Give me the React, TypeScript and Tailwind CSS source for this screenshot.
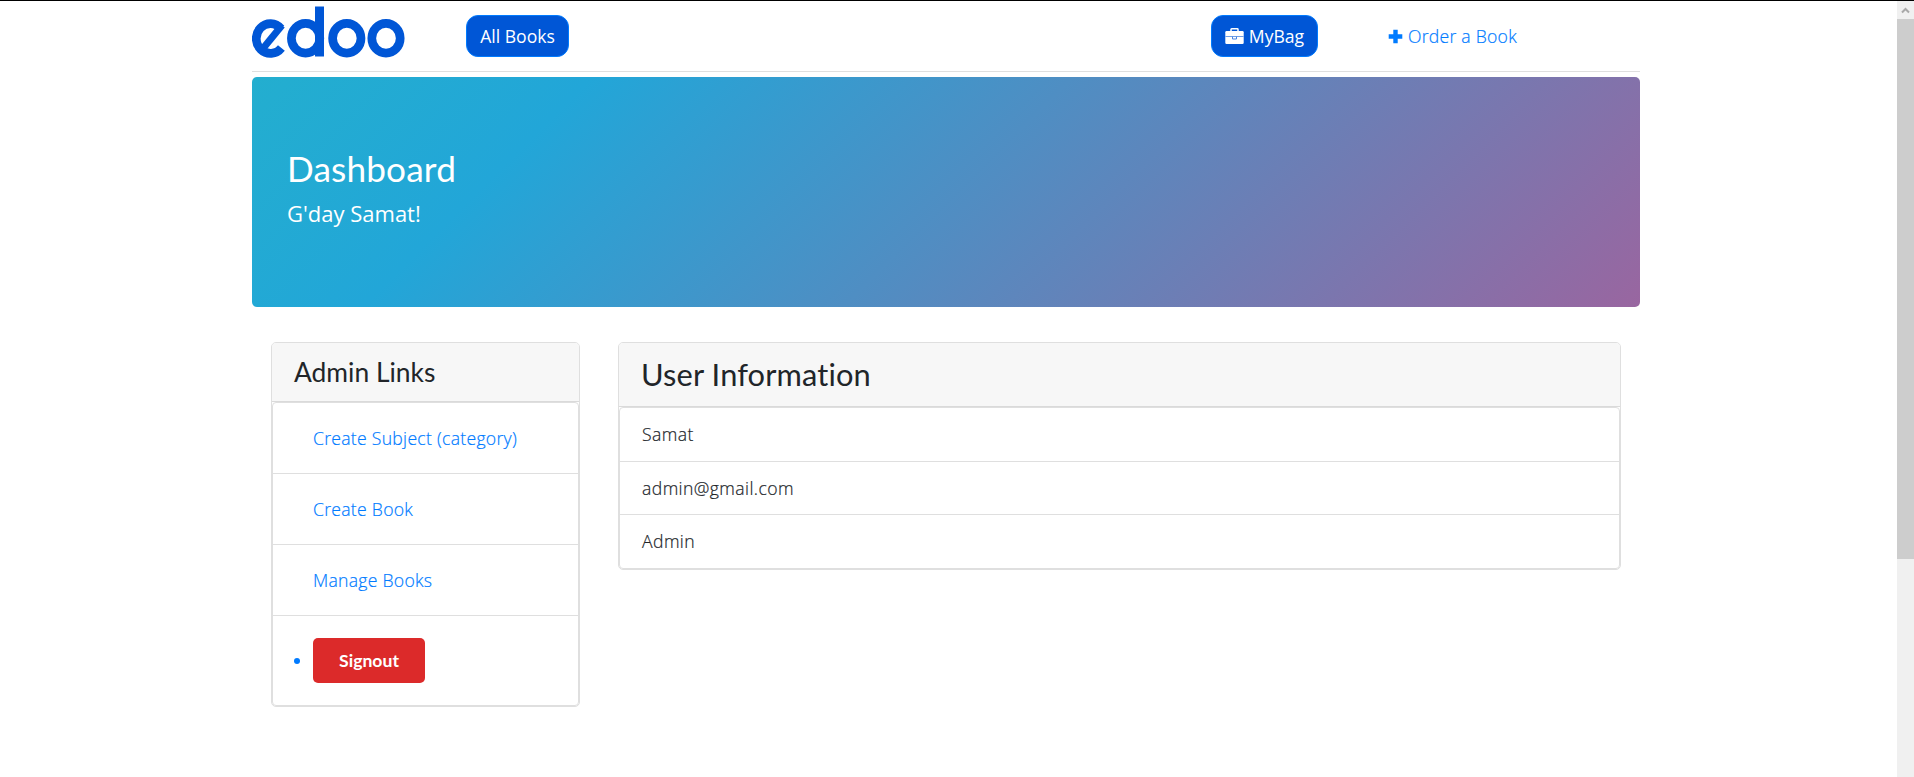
import React from "react";

function Logo() {
  return (
    <svg className="block shrink-0" width="153" height="52" viewBox="0 0 153 52" role="img" aria-label="edoo" fill="none" stroke="#0056d6" strokeWidth="8.7">
      <path d="M29.400 42A14.200 14.900 0 1 1 29 22.500" />
      <path d="M30 19.200L12 41.300" strokeWidth="7" />
      <ellipse cx="53.6" cy="32.300" rx="14.200" ry="14.900" />
      <path d="M67.500 0.500V50.500" strokeWidth="9" />
      <ellipse cx="94.8" cy="32.300" rx="14.200" ry="14.900" />
      <ellipse cx="134" cy="32.300" rx="14.200" ry="14.900" />
    </svg>
  );
}

function Briefcase() {
  return (
    <svg className="block" width="19" height="16" viewBox="0 0 19 16" fill="none">
      <path d="M6 4V1.500Q6 .8 6.700 .8h5.600Q13 .8 13 1.500V4" stroke="#fff" strokeWidth="1.500" />
      <rect x="0.300" y="3" width="18.400" height="13" rx="1.200" fill="#fff" />
      <path d="M0.300 8.500H18.700" stroke="#6f9fe8" strokeWidth="1" />
      <path d="M7.500 8.500V11h4V8.500" stroke="#4a86e2" strokeWidth="1" />
    </svg>
  );
}

const links = ["Create Subject (category)", "Create Book", "Manage Books"];
const info = ["Samat", "admin@gmail.com", "Admin"];

export default function App() {
  return (
    <div className="flex h-[777px] w-full overflow-hidden border-t border-black bg-white font-['Open_Sans',sans-serif] text-[17.6px] font-light leading-[26.4px] text-[#212529] [font-variant-ligatures:none]">
      <div className="min-w-0 flex-1 pl-[252px]">
        <main className="w-[1388px]">
          <header className="flex h-[71px] border-b border-[#dfdfdf] pt-[5px]">
            <Logo />
            <a className="ml-[61px] mt-[9px] flex h-[42px] w-[103px] items-center justify-center rounded-[12px] border border-[#007bff] bg-[#0056d6] font-normal text-white">All Books</a>
            <a className="ml-[642px] mt-[9px] flex h-[42px] w-[107px] items-center justify-center gap-[5px] rounded-[12px] border border-[#007bff] bg-[#0056d6] font-normal text-white">
              <Briefcase />
              <span>MyBag</span>
            </a>
            <a className="ml-[70px] mt-[9px] flex h-[42px] items-center gap-[5px] text-[#007bff]">
              <svg width="15" height="15" viewBox="0 0 15 15"><path d="M7.500 0.700v13.600M0.700 7.500h13.600" stroke="#007bff" strokeWidth="4.400" /></svg>
              <span className="tracking-[0.25px] [-webkit-text-stroke:0.2px_#007bff]">Order a Book</span>
            </a>
          </header>
          <section className="mt-[5px] h-[230px] rounded-[5px] bg-[linear-gradient(135deg,#23aecf_0%,#22a6d8_21%,#9966a0_100%)] pl-[35px] pt-[70px] text-white">
            <h1 className="font-['Lato',sans-serif] text-[35.2px] font-normal leading-[42px] tracking-[0.15px]">Dashboard</h1>
            <p className="mt-[8px] text-[22px] font-normal leading-[33px]">G'day Samat!</p>
          </section>
          <div className="flex items-start gap-[38px] px-[19px] pt-[35px]">
            <section className="w-[309px] rounded-[5px] border border-[#dfdfdf]">
              <h2 className="h-[59px] rounded-t-[4px] border-b border-[#dadada] bg-[#f7f7f7] pl-[22px] pt-[13px] font-['Lato',sans-serif] text-[26.4px] font-normal leading-[32px]">Admin Links</h2>
              <ul className="rounded-[4px] border border-[#dfdfdf] tracking-[0.28px]">
                {links.map((t) => (
                  <li key={t} className="flex h-[71px] items-center border-b border-[#dfdfdf] pl-[40px] text-[#007bff] [-webkit-text-stroke:0.2px_#007bff]">{t}</li>
                ))}
                <li className="flex h-[89px] items-center pl-[21px] tracking-normal">
                  <span className="size-[6px] rounded-full bg-[#007bff]" />
                  <button className="ml-[13px] h-[45px] w-[112px] rounded-[5px] bg-[#dc2a2a] pt-[2px] font-['Lato',sans-serif] font-bold text-white">Signout</button>
                </li>
              </ul>
            </section>
            <section className="w-[1003px] rounded-[5px] border border-[#dfdfdf]">
              <h2 className="h-[64px] rounded-t-[4px] border-b border-[#dadada] bg-[#f7f7f7] pl-[22px] pt-[13px] font-['Lato',sans-serif] text-[30.8px] font-normal leading-[37px] tracking-[0.13px]">User Information</h2>
              <ul className="rounded-[4px] border border-[#dfdfdf] tracking-[0.42px]">
                {info.map((t) => (
                  <li key={t} className="flex h-[53px] items-center border-b border-[#dfdfdf] pl-[22px] [-webkit-text-stroke:0.2px_#212529] first:h-[54px] last:border-b-0">{t}</li>
                ))}
              </ul>
            </section>
          </div>
        </main>
      </div>
      <aside className="flex w-[17px] shrink-0 flex-col bg-[#f0f0f0]">
        <div className="flex h-[18px] items-center justify-center">
          <svg width="9" height="7" viewBox="0 0 9 7"><path d="M1 5.500L4.500 2L8 5.500" fill="none" stroke="#a8a8a8" strokeWidth="2" /></svg>
        </div>
        <div className="h-[540px] bg-[#cdcdcd]" />
      </aside>
    </div>
  );
}
